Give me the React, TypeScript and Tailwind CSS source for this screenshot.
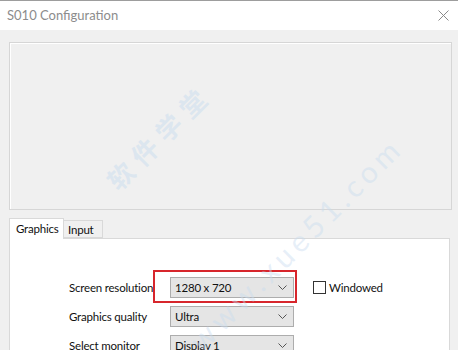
import React from "react";

// ─── S010 Configuration dialog ──────────────────────────────────────
// Windows-style launcher window: title bar, preview panel, tabs and
// the graphics settings with a red call-out around the resolution.
// ────────────────────────────────────────────────────────────────────

const font = { fontFamily: 'Lato, "Noto Sans", "Noto Sans CJK SC", sans-serif' };

function Chevron() {
  return (
    <svg width="9" height="5" viewBox="0 0 9 5" className="shrink-0">
      <path d="M0.5 0.5 L4.5 4.5 L8.5 0.5" fill="none" stroke="#555" strokeWidth="1" />
    </svg>
  );
}

function Select({ value }: { value: string }) {
  return (
    <div className="flex h-[21px] w-[124px] items-center justify-between border border-[#adadad] bg-[#e5e5e5] pl-[4px] pr-[6px] text-[#111]">
      <span>{value}</span>
      <Chevron />
    </div>
  );
}

const rows = [
  { label: "Screen resolution", value: "1280 x 720" },
  { label: "Graphics quality", value: "Ultra" },
  { label: "Select monitor", value: "Display 1" },
];

export default function App() {
  return (
    <div style={font} className="relative flex h-[350px] w-[458px] flex-col overflow-hidden border-t border-[#9d9d9d] bg-[#f0f0f0]">
      {/* ── Title bar ── */}
      <div className="flex h-[29px] shrink-0 items-center justify-between bg-white pl-[7px] pr-[6px]">
        <span className="text-[13px] text-[#8c8c8c]">S010 Configuration</span>
        <svg width="11" height="11" viewBox="0 0 11 11" className="mr-[3px]">
          <path d="M0.5 0.5 L10.5 10.5 M10.5 0.5 L0.5 10.5" stroke="#8a8a8a" strokeWidth="1" />
        </svg>
      </div>

      {/* ── Body ── */}
      <div className="flex flex-1 flex-col pl-[9px] pt-[12px]">
        <div className="h-[168px] w-[443px] border border-[#d6d6d6] bg-[#f0f0f0] shadow-[inset_1px_1px_0_#fff]" />

        {/* ── Tabs ── */}
        <div className="mt-[8px] flex h-[20px] items-end text-[11.5px] tracking-[-0.2px] text-[#111]">
          <div className="relative z-10 -mb-px flex h-[21px] w-[55px] items-center border border-b-0 border-[#d9d9d9] bg-white pl-[6px]">
            Graphics
          </div>
          <div className="flex h-[18px] w-[39px] items-center border border-l-0 border-[#d9d9d9] bg-[#f0f0f0] pl-[4px] pt-[2px]">
            Input
          </div>
        </div>

        <div className="flex w-[441px] flex-1 flex-col gap-[8px] border border-[#d9d9d9] bg-white pl-[59px] pt-[38px] text-[11.5px] tracking-[-0.2px] text-[#111]">
          {rows.map((r) => (
            <div key={r.label} className="flex items-center">
              <span className="w-[101px]">{r.label}</span>
              <Select value={r.value} />
              {r.label === "Screen resolution" && (
                <label className="ml-[19px] flex items-center gap-[3px]">
                  <span className="h-[13px] w-[13px] border border-[#333] bg-white" />
                  Windowed
                </label>
              )}
            </div>
          ))}
        </div>
      </div>

      {/* ── Red call-out ── */}
      <div className="pointer-events-none absolute left-[153px] top-[269px] h-[33px] w-[144px] border-2 border-[#d7262c]" />

      {/* ── Watermark ── */}
      <div className="pointer-events-none absolute left-[92px] top-[117px] -rotate-45 text-[26px] font-bold tracking-[8px] text-[#c9dcef]/50">
        软件学堂
      </div>
      <div className="pointer-events-none absolute left-[152px] top-[220px] -rotate-45 text-[30px] tracking-[5px] text-[#c9dcef]/45">
        www.xue51.com
      </div>
    </div>
  );
}
